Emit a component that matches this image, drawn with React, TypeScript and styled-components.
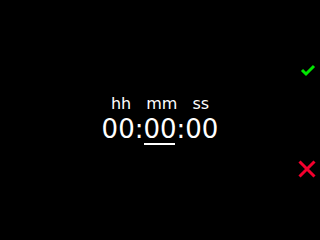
import React from "react";
import styled, { createGlobalStyle } from "styled-components";

const Global = createGlobalStyle`
  html, body { margin: 0; padding: 0; background: #000; }
  body { width: 320px; height: 240px; overflow: hidden; font-family: "DejaVu Sans", sans-serif; }
`;

const Screen = styled.div`
  width: 320px;
  height: 240px;
  background: #000;
  display: grid;
  grid-template-columns: 1fr auto 1fr;
`;

const Center = styled.div`
  display: flex;
  flex-direction: column;
  align-items: center;
  justify-content: center;
  gap: 2px;
  padding-bottom: 2px;
  color: #fff;
`;

const Labels = styled.div`
  display: flex;
  gap: 15px;
  font-size: 16px;
  line-height: 17px;
`;

const Digits = styled.div`
  display: flex;
  font-size: 26px;
  line-height: 30px;
`;

const Field = styled.span<{ $active?: boolean }>`
  position: relative;
  &::after {
    content: "";
    display: ${(p) => (p.$active ? "block" : "none")};
    position: absolute;
    left: 1px;
    right: 1.5px;
    bottom: -1px;
    height: 2px;
    background: #fff;
  }
`;

const Side = styled.div`
  display: flex;
  flex-direction: column;
  align-items: flex-end;
  padding: 63px 4px 0 0;
  gap: 83px;
`;

const Icon = styled.svg`
  display: block;
`;

export default function App() {
  return (
    <>
      <Global />
      <Screen>
        <div />
        <Center>
          <Labels>
            <span>hh</span>
            <span>mm</span>
            <span>ss</span>
          </Labels>
          <Digits>
            <Field>00</Field>
            <span>:</span>
            <Field $active>00</Field>
            <span>:</span>
            <Field>00</Field>
          </Digits>
        </Center>
        <Side>
          <Icon width="16" height="14" viewBox="0 0 16 14">
            <polyline points="2,7 6,11 14,3" fill="none" stroke="#00e600" strokeWidth="3" />
          </Icon>
          <Icon width="18" height="18" viewBox="0 0 18 18">
            <path d="M1.5 1.5 L16.5 16.5 M16.5 1.5 L1.5 16.5" fill="none" stroke="#f5002e" strokeWidth="3" />
          </Icon>
        </Side>
      </Screen>
    </>
  );
}
